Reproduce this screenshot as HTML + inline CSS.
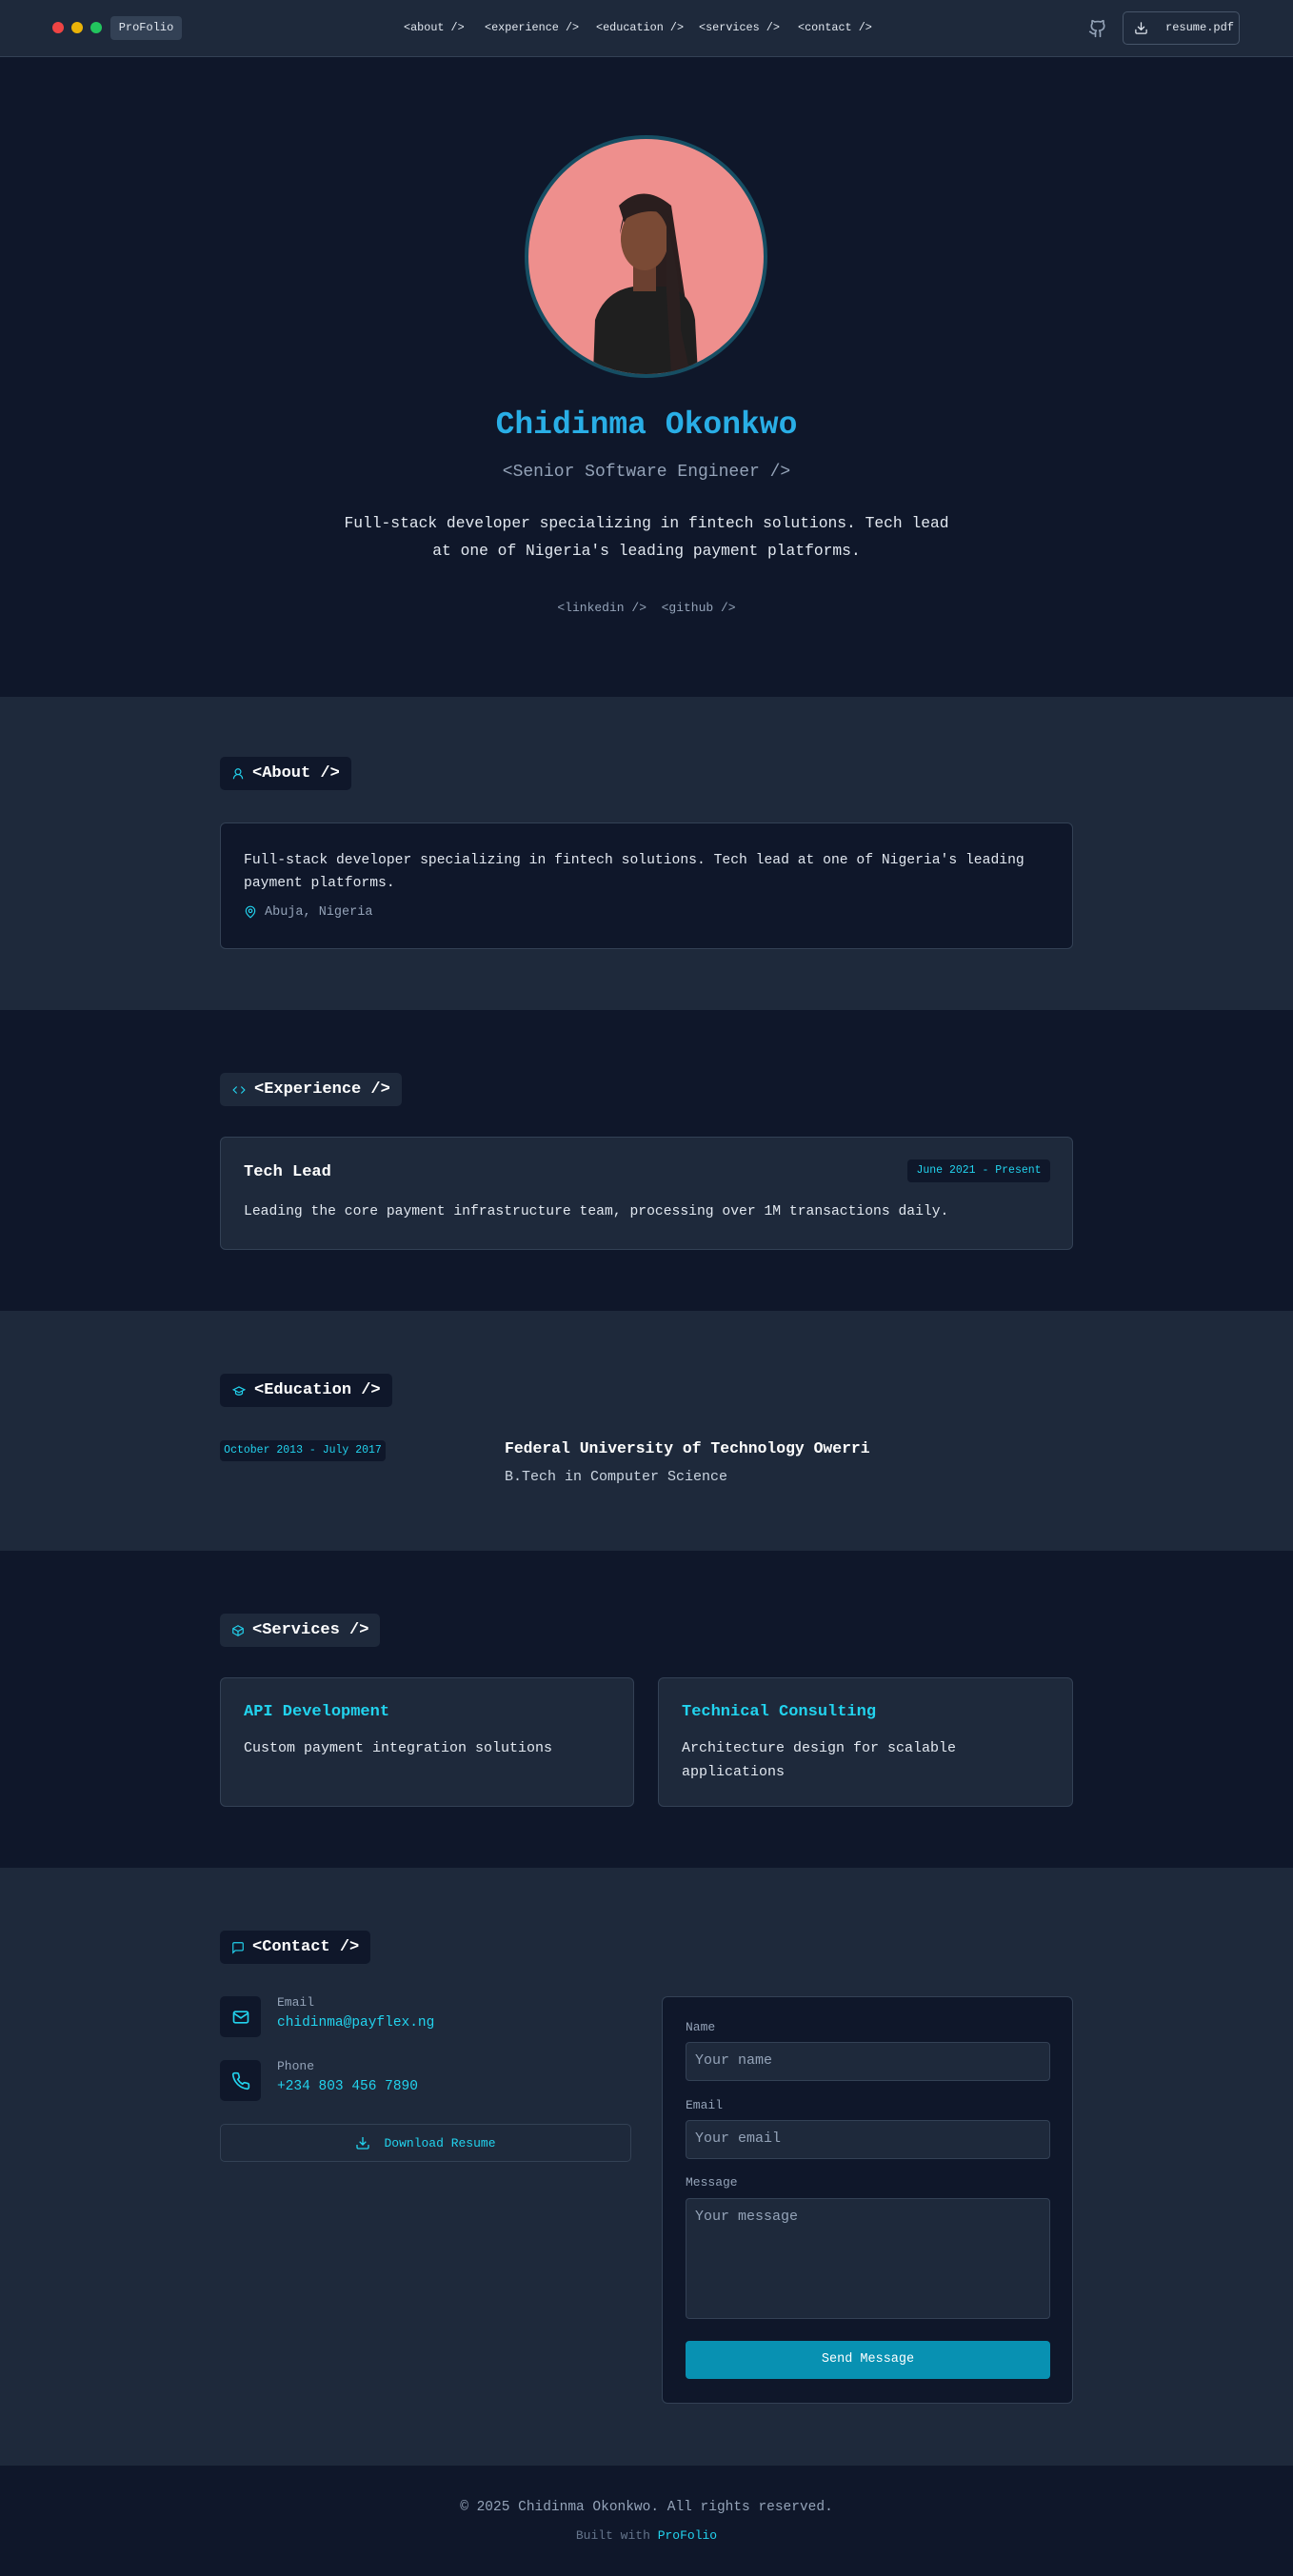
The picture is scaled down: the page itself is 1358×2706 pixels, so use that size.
<!DOCTYPE html>
<html><head><meta charset="utf-8"><style>
*{box-sizing:border-box;margin:0;padding:0}
body{width:1358px;height:2706px;background:#0f172a;font-family:"Liberation Mono",monospace;color:#e2e8f0;position:relative;overflow:hidden}
.abs{position:absolute}
nav{position:absolute;left:0;top:0;width:1358px;height:60px;background:#1e293b;border-bottom:1px solid #334155}
.dot{position:absolute;top:23px;width:12px;height:12px;border-radius:50%}
.navl{position:absolute;top:22px;font-size:11.8px;color:#e2e8f0;white-space:nowrap}
section{position:absolute;left:0;width:1358px}
.h{position:absolute;left:231px;height:35px;background:#0f172a;border-radius:5px;display:flex;align-items:center;padding:0 12px;font-weight:bold;font-size:17px;color:#fff;gap:8px}
.alt .h{background:#0f172a}
.dark .h{background:#1e293b}
.card{position:absolute;border:1px solid #334155;border-radius:6px}
.cy{color:#22d3ee}
.mut{color:#94a3b8}
.inp{position:absolute;left:720px;width:383px;background:#1e293b;border:1px solid #334155;border-radius:4px;color:#94a3b8;font-size:15px;padding:10px 9px}
.lbl{position:absolute;left:720px;font-size:13px;color:#94a3b8}
</style></head><body>
<nav>
<div class="dot" style="left:55px;background:#ef4444"></div>
<div class="dot" style="left:75px;background:#eab308"></div>
<div class="dot" style="left:95px;background:#22c55e"></div>
<div class="abs" style="left:116px;top:17px;width:75px;height:25px;background:#334155;border-radius:4px;font-size:12px;color:#e2e8f0;text-align:center;line-height:25px">ProFolio</div>
<div class="navl" style="left:424px">&lt;about /&gt;</div>
<div class="navl" style="left:509px">&lt;experience /&gt;</div>
<div class="navl" style="left:626px">&lt;education /&gt;</div>
<div class="navl" style="left:734px">&lt;services /&gt;</div>
<div class="navl" style="left:838px">&lt;contact /&gt;</div>
<svg class="abs" style="left:1143px;top:20px" width="20" height="20" viewBox="0 0 24 24" fill="none" stroke="#94a3b8" stroke-width="2" stroke-linecap="round" stroke-linejoin="round"><path d="M15 22v-4a4.8 4.8 0 0 0-1-3.5c3 0 6-2 6-5.5.08-1.25-.27-2.48-1-3.5.28-1.150.28-2.35 0-3.5 0 0-1 0-3 1.5-2.64-.5-5.36-.5-8 0C6 2 5 2 5 2c-.3 1.15-.3 2.35 0 3.5A5.4 5.4 0 0 0 4 9c0 3.5 3 5.5 6 5.5-.39.49-.68 1.05-.85 1.65-.17.6-.22 1.23-.15 1.85v4"/><path d="M9 18c-4.51 2-5-2-7-2"/></svg>
<div class="abs" style="left:1179px;top:12px;width:123px;height:35px;border:1px solid #475569;border-radius:5px;font-size:12px;line-height:33px;padding-left:44px">resume.pdf</div>
<svg class="abs" style="left:1191px;top:22px" width="15" height="15" viewBox="0 0 24 24" fill="none" stroke="#e2e8f0" stroke-width="2" stroke-linecap="round"><path d="M21 15v4a2 2 0 0 1-2 2H5a2 2 0 0 1-2-2v-4M7 10l5 5 5-5M12 15V3"/></svg>
</nav>

<div class="abs" style="left:551px;top:142px;width:255px;height:255px;border-radius:50%;border:4px solid #164e63;background:#ee8f8d;overflow:hidden">
<svg width="247" height="247" viewBox="0 0 247 247">
<path d="M95 70 Q120 45 150 70 L165 170 L175 247 L140 247 L120 150 Z" fill="#2a1e1e"/>
<path d="M70 190 Q80 160 110 155 L145 155 Q170 160 175 190 L178 247 L68 247 Z" fill="#1f1f1f"/>
<rect x="110" y="130" width="24" height="30" fill="#6b4030"/>
<ellipse cx="122" cy="105" rx="25" ry="33" fill="#7a4a35"/>
<path d="M96 100 Q100 62 125 62 Q150 65 150 100 L147 80 Q125 70 100 85 Z" fill="#2a1e1e"/>
<path d="M145 90 Q160 140 160 200 L170 247 L150 247 L145 160 Z" fill="#2b2020"/>
</svg></div>
<div class="abs" style="left:0;width:1358px;top:428px;text-align:center;font-size:33px;font-weight:bold;color:#29aee6">Chidinma Okonkwo</div>
<div class="abs" style="left:0;width:1358px;top:486px;text-align:center;font-size:18px;color:#94a3b8">&lt;Senior Software Engineer /&gt;</div>
<div class="abs" style="left:349px;width:660px;top:535px;text-align:center;font-size:16.3px;line-height:29px;color:#e2e8f0">Full-stack developer specializing in fintech solutions. Tech lead at one of Nigeria's leading payment platforms.</div>
<div class="abs" style="left:0;width:1358px;top:631px;text-align:center;font-size:13px;color:#94a3b8">&lt;linkedin /&gt;&nbsp;&nbsp;&lt;github /&gt;</div>

<section class="alt" style="top:732px;height:329px;background:#1e293b">
<div class="h" style="top:63px"><svg width="14" height="16" viewBox="0 0 24 24" fill="none" stroke="#22d3ee" stroke-width="2"><circle cx="12" cy="8" r="5"/><path d="M20 21a8 8 0 0 0-16 0"/></svg>&lt;About /&gt;</div>
<div class="card" style="left:231px;top:132px;width:896px;height:133px;background:#0f172a;padding:27px 24px">
<div style="font-size:14.7px;line-height:24px">Full-stack developer specializing in fintech solutions. Tech lead at one of Nigeria's leading payment platforms.</div>
<div class="mut" style="font-size:13.5px;margin-top:10px;display:flex;align-items:center;gap:8px"><svg width="14" height="16" viewBox="0 0 24 24" fill="none" stroke="#22d3ee" stroke-width="2"><path d="M20 10c0 6-8 12-8 12s-8-6-8-12a8 8 0 0 1 16 0Z"/><circle cx="12" cy="10" r="3"/></svg>Abuja, Nigeria</div>
</div>
</section>

<section class="dark" style="top:1061px;height:316px;background:#0f172a">
<div class="h" style="top:66px"><svg width="16" height="14" viewBox="0 0 24 24" fill="none" stroke="#22d3ee" stroke-width="2"><path d="M16 18l6-6-6-6M8 6l-6 6 6 6"/></svg>&lt;Experience /&gt;</div>
<div class="card" style="left:231px;top:133px;width:896px;height:119px;background:#1e293b">
<div class="abs" style="left:24px;top:27px;font-size:17px;font-weight:bold;color:#fff">Tech Lead</div>
<div class="abs cy" style="left:721px;top:23px;width:150px;height:24px;background:#0f172a;border-radius:4px;font-size:11.5px;text-align:center;line-height:24px">June 2021 - Present</div>
<div class="abs" style="left:24px;top:70px;font-size:14.7px">Leading the core payment infrastructure team, processing over 1M transactions daily.</div>
</div>
</section>

<section class="alt" style="top:1377px;height:252px;background:#1e293b">
<div class="h" style="top:66px"><svg width="16" height="14" viewBox="0 0 24 24" fill="none" stroke="#22d3ee" stroke-width="2"><path d="M22 10L12 5 2 10l10 5 10-5z"/><path d="M6 12v5c3 3 9 3 12 0v-5"/></svg>&lt;Education /&gt;</div>
<div class="abs cy" style="left:231px;top:136px;width:174px;height:22px;background:#0f172a;border-radius:4px;font-size:11.5px;text-align:center;line-height:22px">October 2013 - July 2017</div>
<div class="abs" style="left:530px;top:135px;font-size:16.4px;font-weight:bold;color:#fff">Federal University of Technology Owerri</div>
<div class="abs" style="left:530px;top:166px;font-size:15px;color:#cbd5e1">B.Tech in Computer Science</div>
</section>

<section class="dark" style="top:1629px;height:333px;background:#0f172a">
<div class="h" style="top:66px"><svg width="14" height="16" viewBox="0 0 24 24" fill="none" stroke="#22d3ee" stroke-width="2"><path d="M21 8l-9-5-9 5v8l9 5 9-5z"/><path d="M3 8l9 5 9-5M12 13v8"/></svg>&lt;Services /&gt;</div>
<div class="card" style="left:231px;top:133px;width:435px;height:136px;background:#1e293b;padding:26px 24px">
<div class="cy" style="font-size:17px;font-weight:bold">API Development</div>
<div style="font-size:15px;margin-top:16px;line-height:25px">Custom payment integration solutions</div></div>
<div class="card" style="left:691px;top:133px;width:436px;height:136px;background:#1e293b;padding:26px 24px">
<div class="cy" style="font-size:17px;font-weight:bold">Technical Consulting</div>
<div style="font-size:15px;margin-top:16px;line-height:25px">Architecture design for scalable applications</div></div>
</section>

<section class="alt" style="top:1962px;height:627px;background:#1e293b">
<div class="h" style="top:66px"><svg width="14" height="16" viewBox="0 0 24 24" fill="none" stroke="#22d3ee" stroke-width="2"><path d="M21 15a2 2 0 0 1-2 2H7l-4 4V5a2 2 0 0 1 2-2h14a2 2 0 0 1 2 2z"/></svg>&lt;Contact /&gt;</div>
<div class="abs" style="left:231px;top:135px;width:43px;height:43px;background:#0f172a;border-radius:5px;display:flex;align-items:center;justify-content:center"><svg width="20" height="20" viewBox="0 0 24 24" fill="none" stroke="#22d3ee" stroke-width="2"><rect x="3" y="5" width="18" height="14" rx="2"/><path d="M3 7l9 6 9-6"/></svg></div>
<div class="abs mut" style="left:291px;top:134px;font-size:13px">Email</div>
<div class="abs cy" style="left:291px;top:155px;font-size:14.5px">chidinma@payflex.ng</div>
<div class="abs" style="left:231px;top:202px;width:43px;height:43px;background:#0f172a;border-radius:5px;display:flex;align-items:center;justify-content:center"><svg width="20" height="20" viewBox="0 0 24 24" fill="none" stroke="#22d3ee" stroke-width="2"><path d="M22 16.9v3a2 2 0 0 1-2.2 2 19.8 19.8 0 0 1-8.6-3.1 19.5 19.5 0 0 1-6-6A19.8 19.8 0 0 1 2.1 4.2 2 2 0 0 1 4.1 2h3a2 2 0 0 1 2 1.7c.1 1 .4 1.9.7 2.8a2 2 0 0 1-.5 2.1L8.1 9.9a16 16 0 0 0 6 6l1.3-1.3a2 2 0 0 1 2.1-.4c.9.3 1.8.6 2.8.7a2 2 0 0 1 1.7 2z"/></svg></div>
<div class="abs mut" style="left:291px;top:201px;font-size:13px">Phone</div>
<div class="abs cy" style="left:291px;top:222px;font-size:14.5px">+234 803 456 7890</div>
<div class="abs cy" style="left:231px;top:269px;width:432px;height:40px;border:1px solid #334155;border-radius:5px;font-size:13px;display:flex;align-items:center;justify-content:center;gap:14px"><svg width="16" height="16" viewBox="0 0 24 24" fill="none" stroke="#22d3ee" stroke-width="2"><path d="M21 15v4a2 2 0 0 1-2 2H5a2 2 0 0 1-2-2v-4M7 10l5 5 5-5M12 15V3"/></svg>Download Resume</div>
<div class="card" style="left:695px;top:135px;width:432px;height:428px;background:#0f172a"></div>
<div class="lbl" style="top:160px">Name</div>
<div class="inp" style="top:183px;height:41px">Your name</div>
<div class="lbl" style="top:242px">Email</div>
<div class="inp" style="top:265px;height:41px">Your email</div>
<div class="lbl" style="top:323px">Message</div>
<div class="inp" style="top:347px;height:127px">Your message</div>
<div class="abs" style="left:720px;top:497px;width:383px;height:40px;background:#0891b2;border-radius:4px;color:#fff;font-size:13.5px;text-align:center;line-height:40px">Send Message</div>
</section>

<section style="top:2589px;height:117px;background:#0f172a;border-top:1px solid #1e293b">
<div class="abs mut" style="left:0;width:1358px;top:36px;text-align:center;font-size:14.5px">© 2025 Chidinma Okonkwo. All rights reserved.</div>
<div class="abs" style="left:0;width:1358px;top:66px;text-align:center;font-size:13px;color:#64748b">Built with <span class="cy">ProFolio</span></div>
</section>
</body></html>
